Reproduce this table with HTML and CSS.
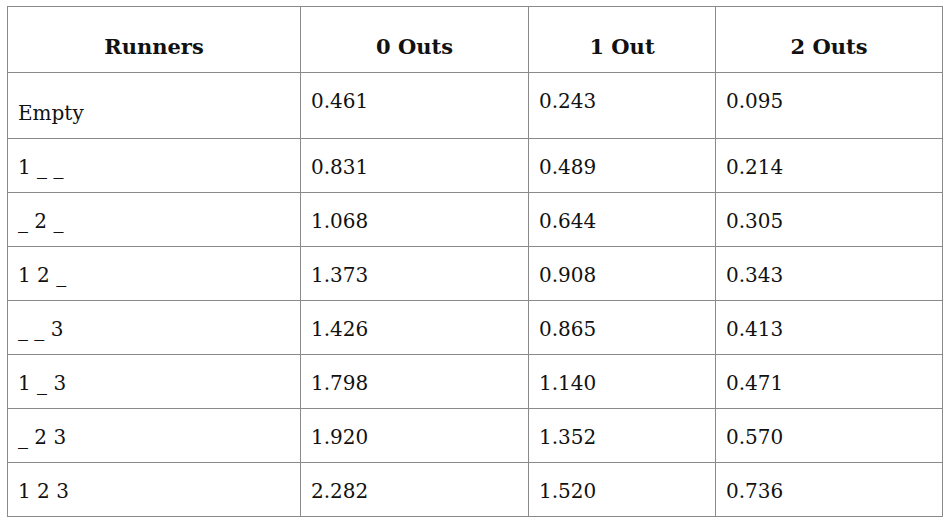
FILE: index.html
```html
<!DOCTYPE html>
<html>
<head>
<meta charset="utf-8">
<link rel="stylesheet" href="styles.css">
</head>
<body>
<table class="re-table">
  <colgroup>
    <col class="c1"><col class="c2"><col class="c3"><col class="c4">
  </colgroup>
  <thead>
    <tr><th>Runners</th><th>0 Outs</th><th>1 Out</th><th>2 Outs</th></tr>
  </thead>
  <tbody>
    <tr><td class="first">Empty</td><td>0.461</td><td>0.243</td><td>0.095</td></tr>
    <tr><td>1 _ _</td><td>0.831</td><td>0.489</td><td>0.214</td></tr>
    <tr><td>_ 2 _</td><td>1.068</td><td>0.644</td><td>0.305</td></tr>
    <tr><td>1 2 _</td><td>1.373</td><td>0.908</td><td>0.343</td></tr>
    <tr><td>_ _ 3</td><td>1.426</td><td>0.865</td><td>0.413</td></tr>
    <tr><td>1 _ 3</td><td>1.798</td><td>1.140</td><td>0.471</td></tr>
    <tr><td>_ 2 3</td><td>1.920</td><td>1.352</td><td>0.570</td></tr>
    <tr><td>1 2 3</td><td>2.282</td><td>1.520</td><td>0.736</td></tr>
  </tbody>
</table>
</body>
</html>
```
FILE: styles.css
```css
html, body {
  margin: 0;
  padding: 0;
  background: #ffffff;
}
body {
  padding: 6px 0 0 7px;
  font-family: "DejaVu Serif", "Liberation Serif", serif;
  color: #111111;
}
.re-table {
  border-collapse: collapse;
  width: 935px;
  table-layout: fixed;
  font-size: 20px;
}
.c1 { width: 293px; }
.c2 { width: 228px; }
.c3 { width: 187px; }
.c4 { width: 227px; }
.re-table th,
.re-table td {
  border: 1px solid #8a8a8a;
  vertical-align: top;
  line-height: 24px;
  height: 24px;
  padding: 16px 10px 13px 10px;
}
.re-table th {
  font-weight: bold;
  font-size: 21px;
  text-align: center;
  padding-top: 28px;
}
.re-table td {
  text-align: left;
}
.re-table td.first {
  padding-top: 28px;
}
```
